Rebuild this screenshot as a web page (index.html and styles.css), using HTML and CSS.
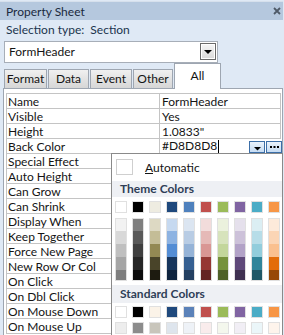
FILE: index.html
```html
<!DOCTYPE html>
<html lang="en">
<head>
    <meta charset="UTF-8">
    <meta name="viewport" content="width=device-width, initial-scale=1.0">
    <title>Property Sheet</title>
    <link rel="stylesheet" href="styles.css">
</head>
<body>
    <div class="sheet">
        <div class="titlebar">
            <span>Property Sheet</span>
            <svg class="close" width="8" height="8" viewBox="0 0 8 8">
                <path d="M1 1 L7 7 M7 1 L1 7" stroke="#4f5a68" stroke-width="1.8" fill="none"/>
            </svg>
        </div>
        <div class="seltype">Selection type:&nbsp; Section</div>
        <div class="combo">
            <span class="combo-text">FormHeader</span>
            <div class="combo-btn">
                <svg width="8" height="5" viewBox="0 0 8 5"><path d="M0 0 H8 L4 4 Z" fill="#000"/></svg>
            </div>
        </div>
        <div class="tabs">
            <div class="tab tab-format">Format</div>
            <div class="tab tab-data">Data</div>
            <div class="tab tab-event">Event</div>
            <div class="tab tab-other">Other</div>
            <div class="tab tab-all active">All</div>
        </div>
        <div class="panel">
            <div class="grid">
                <div class="row"><div class="label">Name</div><div class="value">FormHeader</div></div>
                <div class="row"><div class="label">Visible</div><div class="value">Yes</div></div>
                <div class="row"><div class="label">Height</div><div class="value">1.0833"</div></div>
                <div class="row">
                    <div class="label">Back Color</div>
                    <div class="value editing">
                        <span>#D8D8D8</span><span class="caret"></span>
                        <div class="cell-btn drop">
                            <svg width="7" height="4" viewBox="0 0 7 4"><path d="M0 0 H7 L3.5 3.5 Z" fill="#000"/></svg>
                        </div>
                        <div class="cell-btn dots">
                            <svg width="9" height="2" viewBox="0 0 9 2"><path d="M0 0h2v2h-2z M3.5 0h2v2h-2z M7 0h2v2h-2z" fill="#000"/></svg>
                        </div>
                    </div>
                </div>
                <div class="row"><div class="label">Special Effect</div><div class="value"></div></div>
                <div class="row"><div class="label">Auto Height</div><div class="value"></div></div>
                <div class="row"><div class="label">Can Grow</div><div class="value"></div></div>
                <div class="row"><div class="label">Can Shrink</div><div class="value"></div></div>
                <div class="row"><div class="label">Display When</div><div class="value"></div></div>
                <div class="row"><div class="label">Keep Together</div><div class="value"></div></div>
                <div class="row"><div class="label">Force New Page</div><div class="value"></div></div>
                <div class="row"><div class="label">New Row Or Col</div><div class="value"></div></div>
                <div class="row"><div class="label">On Click</div><div class="value"></div></div>
                <div class="row"><div class="label">On Dbl Click</div><div class="value"></div></div>
                <div class="row"><div class="label">On Mouse Down</div><div class="value"></div></div>
                <div class="row"><div class="label">On Mouse Up</div><div class="value"></div></div>
            </div>
        </div>

        <!-- colour picker dropped down from Back Color -->
        <div class="picker">
            <div class="auto-row">
                <div class="auto-swatch"></div>
                <span><u>A</u>utomatic</span>
            </div>
            <div class="picker-head">Theme Colors</div>
            <div class="swatch-row">
                <div class="sw" style="background:#ffffff"></div>
                <div class="sw" style="background:#000000"></div>
                <div class="sw" style="background:#eeece1"></div>
                <div class="sw" style="background:#1f497d"></div>
                <div class="sw" style="background:#4f81bd"></div>
                <div class="sw" style="background:#c0504d"></div>
                <div class="sw" style="background:#9bbb59"></div>
                <div class="sw" style="background:#8064a2"></div>
                <div class="sw" style="background:#4bacc6"></div>
                <div class="sw" style="background:#f79646"></div>
            </div>
            <div class="shade-row">
                <div class="shade"><i style="background:#f2f2f2"></i><i style="background:#d8d8d8"></i><i style="background:#bfbfbf"></i><i style="background:#a5a5a5"></i><i style="background:#7f7f7f"></i></div>
                <div class="shade"><i style="background:#7f7f7f"></i><i style="background:#595959"></i><i style="background:#3f3f3f"></i><i style="background:#262626"></i><i style="background:#0c0c0c"></i></div>
                <div class="shade"><i style="background:#ddd9c3"></i><i style="background:#c4bd97"></i><i style="background:#938953"></i><i style="background:#494429"></i><i style="background:#1d1b10"></i></div>
                <div class="shade"><i style="background:#c6d9f0"></i><i style="background:#8db3e2"></i><i style="background:#548dd4"></i><i style="background:#17365d"></i><i style="background:#0f243e"></i></div>
                <div class="shade"><i style="background:#dbe5f1"></i><i style="background:#b8cce4"></i><i style="background:#95b3d7"></i><i style="background:#366092"></i><i style="background:#244061"></i></div>
                <div class="shade"><i style="background:#f2dcdb"></i><i style="background:#e5b9b7"></i><i style="background:#d99694"></i><i style="background:#953734"></i><i style="background:#632423"></i></div>
                <div class="shade"><i style="background:#ebf1dd"></i><i style="background:#d7e3bc"></i><i style="background:#c3d69b"></i><i style="background:#76923c"></i><i style="background:#4f6128"></i></div>
                <div class="shade"><i style="background:#e5e0ec"></i><i style="background:#ccc1d9"></i><i style="background:#b2a2c7"></i><i style="background:#5f497a"></i><i style="background:#3f3151"></i></div>
                <div class="shade"><i style="background:#dbeef3"></i><i style="background:#b7dde8"></i><i style="background:#92cddc"></i><i style="background:#31859b"></i><i style="background:#205867"></i></div>
                <div class="shade"><i style="background:#fdeada"></i><i style="background:#fbd5b5"></i><i style="background:#fac08f"></i><i style="background:#e36c09"></i><i style="background:#974806"></i></div>
            </div>
            <div class="picker-head std">Standard Colors</div>
            <div class="swatch-row std-row">
                <div class="sw" style="background:#ffffff"></div>
                <div class="sw" style="background:#000000"></div>
                <div class="sw" style="background:#fbf3e8"></div>
                <div class="sw" style="background:#1f497d"></div>
                <div class="sw" style="background:#5b82b9"></div>
                <div class="sw" style="background:#c0504d"></div>
                <div class="sw" style="background:#9bbb59"></div>
                <div class="sw" style="background:#8064a2"></div>
                <div class="sw" style="background:#4bacc6"></div>
                <div class="sw" style="background:#f79646"></div>
            </div>
            <div class="swatch-row std-row2">
                <div class="sw" style="background:#ededed"></div>
                <div class="sw" style="background:#8c8c8c"></div>
                <div class="sw" style="background:#c8c5bb"></div>
                <div class="sw" style="background:#dee5ed"></div>
                <div class="sw" style="background:#eef2f7"></div>
                <div class="sw" style="background:#f9ecec"></div>
                <div class="sw" style="background:#f4f7ed"></div>
                <div class="sw" style="background:#f1eef5"></div>
                <div class="sw" style="background:#ebf6f9"></div>
                <div class="sw" style="background:#fef4ec"></div>
            </div>
        </div>
    </div>
</body>
</html>
```

FILE: styles.css
```css
body {
    margin: 0;
    width: 284px;
    height: 335px;
    overflow: hidden;
    background-color: #dfe9f5;
    font-family: Lato, "Noto Sans", sans-serif;
    font-size: 12px;
    color: #141414;
}
.sheet {
    position: relative;
    width: 284px;
    height: 335px;
    overflow: hidden;
}
.titlebar {
    margin-top: 1px;
    height: 19px;
    padding: 0 6px;
    display: flex;
    align-items: center;
    justify-content: space-between;
    background-color: #b5c8de;
    border-top: 1px solid #d6e0ec;
    color: #1b2a3f;
    box-sizing: border-box;
    width: 283px;
}
.close {
    margin-right: -4px;
}
.seltype {
    height: 16px;
    line-height: 16px;
    padding: 2px 6px 0;
    margin-bottom: 3px;
    color: #20344d;
}
.combo {
    margin-left: 4px;
    width: 214px;
    height: 22px;
    box-sizing: border-box;
    border: 1px solid #a7aeb8;
    background-color: white;
    display: flex;
    align-items: flex-start;
}
.combo-text {
    flex: 1;
    line-height: 20px;
    padding-left: 4px;
}
.combo-btn {
    width: 16px;
    height: 17px;
    margin: 1px 1px 0 0;
    box-sizing: border-box;
    border: 1px solid #6a6a6a;
    background: linear-gradient(#f6f6f6, #d9d9d9);
    box-shadow: inset 0 0 0 1px #fff;
    display: flex;
    align-items: center;
    justify-content: center;
}
.combo-btn svg {
    margin-top: 2px;
}
.tabs {
    height: 25px;
    padding-left: 4px;
    display: flex;
    align-items: flex-end;
    position: relative;
    z-index: 1;
}
.tab {
    height: 19px;
    box-sizing: border-box;
    margin-right: 1px;
    border: 1px solid #9ea6b1;
    border-bottom: none;
    background: linear-gradient(#f0f0f0, #d6d6d6);
    text-align: center;
    line-height: 18px;
}
.tab-format { width: 43px; }
.tab-data { width: 41px; }
.tab-event { width: 42px; }
.tab-other { width: 40px; }
.tab-all { width: 47px; }
.tab.active {
    height: 26px;
    margin-bottom: -1px;
    background: white;
    line-height: 24px;
}
.panel {
    margin-left: 3px;
    width: 280px;
    height: 260px;
    box-sizing: border-box;
    border: 1px solid #9ea6b1;
    background-color: white;
    padding: 4px 1px 0 2px;
}
.grid {
    width: 274px;
    border-top: 1px solid #c4c4c4;
    border-left: 1px solid #c4c4c4;
}
.row {
    display: flex;
    height: 15px;
    box-sizing: border-box;
    border-bottom: 1px solid #c4c4c4;
}
.label {
    width: 151px;
    padding: 1px 0 0 1px;
    border-right: 1px solid #c4c4c4;
    line-height: 13px;
    white-space: nowrap;
}
.value {
    flex: 1;
    padding: 1px 0 0 2px;
    line-height: 13px;
    border-right: 1px solid #c4c4c4;
    display: flex;
}
.value.editing {
    border-right: none;
    align-items: flex-end;
    padding-top: 0;
}
.value.editing span:first-child {
    line-height: 14px;
    padding-top: 1px;
}
.caret {
    width: 1px;
    height: 13px;
    background-color: #000;
    margin-left: 1px;
    align-self: center;
}
.cell-btn {
    width: 16px;
    height: 12px;
    box-sizing: border-box;
    border: 1px solid #3c6fa8;
    background: linear-gradient(#eaf3fc, #c6dcf3);
    display: flex;
    justify-content: center;
}
.cell-btn.drop {
    margin-left: auto;
    margin-right: 1px;
    align-items: flex-end;
    padding-bottom: 1px;
}
.cell-btn.dots {
    align-items: center;
    margin-right: -1px;
}
.picker {
    position: absolute;
    left: 111px;
    top: 153px;
    width: 172px;
    height: 200px;
    box-sizing: border-box;
    border: 1px solid #8a8a8a;
    background-color: white;
    z-index: 2;
}
.auto-row {
    height: 26px;
    display: flex;
    align-items: center;
    padding-left: 4px;
}
.auto-swatch {
    width: 17px;
    height: 16px;
    box-sizing: border-box;
    border: 1px solid #cfcfcf;
    background-color: white;
    margin-right: 12px;
}
.picker-head {
    margin-top: 1px;
    height: 16px;
    line-height: 16px;
    padding-left: 8px;
    background-color: #eef0f4;
    font-weight: bold;
    color: #2f3e57;
}
.picker-head.std {
    margin-top: 4px;
    height: 18px;
    line-height: 18px;
}
.swatch-row {
    display: flex;
    gap: 5px;
    padding-left: 3px;
    margin-top: 4px;
}
.std-row {
    margin-top: 3px;
}
.sw {
    width: 12px;
    height: 12px;
    box-sizing: border-box;
    border: 1px solid #e0e0e0;
}
.shade-row {
    display: flex;
    gap: 5px;
    padding-left: 3px;
    margin-top: 5px;
}
.shade {
    width: 12px;
    box-sizing: border-box;
    border: 1px solid #e0e0e0;
    display: flex;
    flex-direction: column;
}
.shade i {
    display: block;
    height: 12px;
}
.shade i:nth-child(2),
.shade i:nth-child(3),
.shade i:nth-child(4) {
    height: 13px;
}
.shade i:nth-child(5) {
    height: 10px;
}
```
